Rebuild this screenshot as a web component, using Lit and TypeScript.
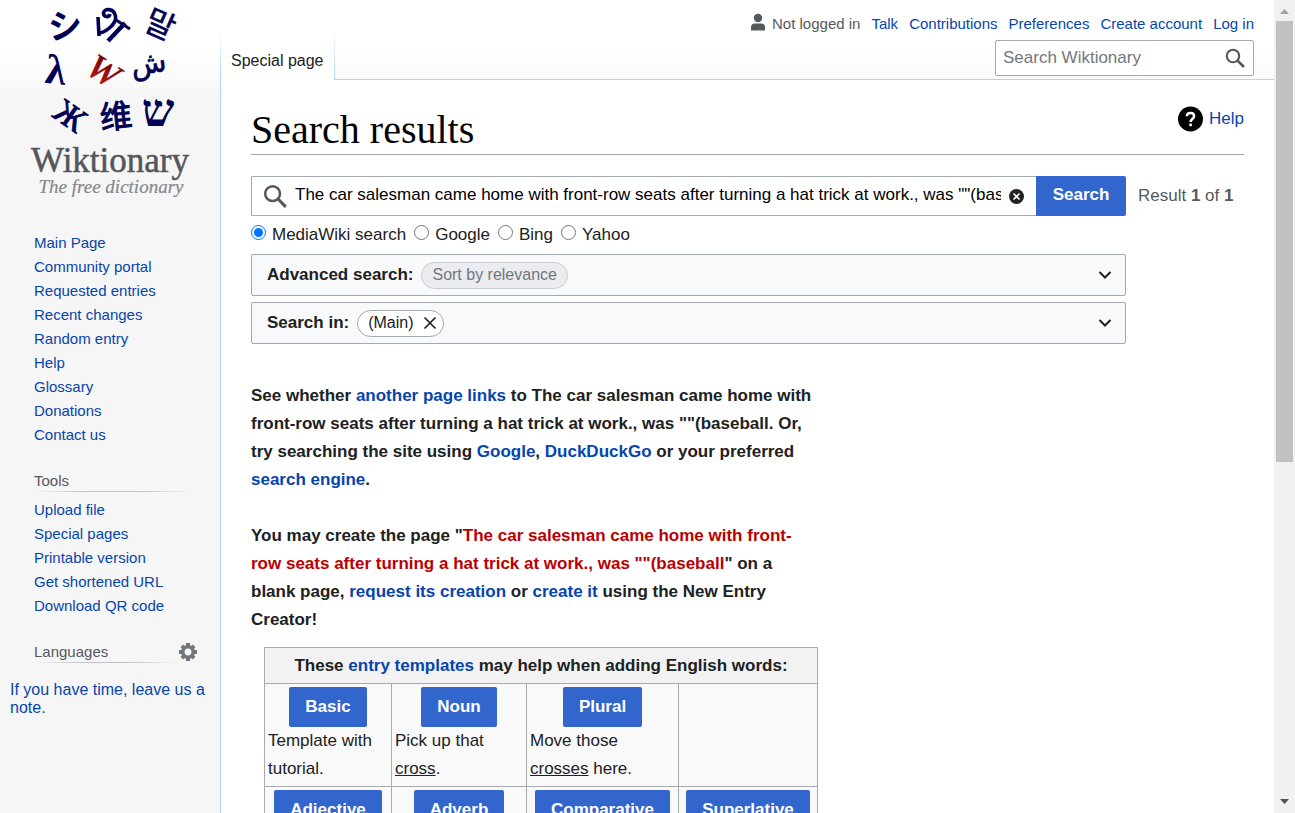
import { LitElement, html, css, svg, nothing } from "lit";
import { customElement, state } from "lit/decorators.js";

const QUERY = 'The car salesman came home with front-row seats after turning a hat trick at work., was ""(baseball';

const NAVIGATION = [
  "Main Page", "Community portal", "Requested entries", "Recent changes", "Random entry",
  "Help", "Glossary", "Donations", "Contact us",
];
const TOOLS = ["Upload file", "Special pages", "Printable version", "Get shortened URL", "Download QR code"];
const PERSONAL = ["Talk", "Contributions", "Preferences", "Create account", "Log in"];
const ENGINES = ["MediaWiki search", "Google", "Bing", "Yahoo"];

const magnifier = svg`<circle cx="8" cy="8" r="6.2" fill="none" stroke="currentColor" stroke-width="2.1"/>
  <path d="M12.3 12.3 19 19" fill="none" stroke="currentColor" stroke-width="2.6"/>`;

@customElement("wikt-logo")
class WiktLogo extends LitElement {
  static styles = css`
    :host { display: block; }
    svg { display: block; width: 100%; height: auto; }
    .navy { fill: #000054; text-anchor: middle; }
    .cjk { font: 700 34px "Noto Sans CJK JP", sans-serif; }
    .hangul { font: 400 32px "Noto Sans CJK KR", sans-serif; stroke: #000054; stroke-width: 0.5; }
    .han { font: 400 32px "Noto Sans CJK SC", sans-serif; stroke: #000054; stroke-width: 1; }
    .greek { font: 700 42px "Liberation Serif", serif; }
    .cyrillic { font: 400 34px "Liberation Serif", serif; stroke: #000054; stroke-width: 0.9; }
    .arabic { font: 400 29px "DejaVu Sans", sans-serif; stroke: #000054; stroke-width: 0.6; }
    .hebrew { font: 700 46px "Liberation Serif", serif; }
    .red { fill: url(#ruby); text-anchor: middle; font: italic 700 36px "Liberation Serif", serif; }
    .name { fill: #54565a; text-anchor: middle; font: 35px "Liberation Serif", serif; stroke: #54565a; stroke-width: 0.5; }
    .tagline { fill: #86888b; text-anchor: middle; font: italic 19px "Liberation Serif", serif; stroke: #86888b; stroke-width: 0.2; }
  `;
  render() {
    return html`<svg viewBox="0 0 220 208" role="img" aria-label="Wiktionary">
      <defs><linearGradient id="ruby" x1="0" y1="0" x2="0" y2="1">
        <stop offset="0" stop-color="#5c0000"/><stop offset="1" stop-color="#d01818"/>
      </linearGradient></defs>
      <text class="navy cjk" x="65" y="38" transform="rotate(-4 65 26)">シ</text>
      <g fill="none" stroke="#000054" stroke-width="3.6">
        <path d="M98 17 99 36"/>
        <path d="M98.500 33C105 33 117 24 115.500 16C114 8 104 8 103.500 13C103.500 17 109 18 110 14"/>
        <path d="M125 23 108 41" stroke-width="4.4"/>
        <path d="M116 20 130 29" stroke-width="3"/>
      </g>
      <text class="navy hangul" x="160" y="36" transform="rotate(24 160 25)">말</text>
      <text class="navy greek" x="56" y="84" transform="rotate(6 56 70)">λ</text>
      <text class="red" x="104" y="83" transform="rotate(33 104 70)">W</text>
      <text class="navy arabic" x="149" y="73" transform="rotate(-8 149 67)">ش</text>
      <text class="navy cyrillic" x="70" y="127" transform="rotate(35 70 116)">Ж</text>
      <text class="navy han" x="116" y="128" transform="rotate(-6 116 116)">维</text>
      <text class="navy hebrew" x="158" y="126">ש</text>
      <text class="name" x="110" y="172">Wiktionary</text>
      <text class="tagline" x="111" y="193">The free dictionary</text>
    </svg>`;
  }
}

@customElement("app-root")
class AppRoot extends LitElement {
  @state() private query = QUERY;
  @state() private engine = ENGINES[0];

  static styles = css`
    :host {
      display: flex; height: 100vh; overflow: hidden; background: #fff; color: #202122;
      font: 17px/28px "Liberation Sans", Arial, sans-serif;
    }
    * { box-sizing: border-box; }
    a { color: #0645ad; text-decoration: none; }
    a:hover { text-decoration: underline; }
    ul { list-style: none; margin: 0; padding: 0; }
    button, input { font: inherit; }
    button { cursor: pointer; }

    .page { flex: 1; min-width: 0; display: grid; grid-template-columns: 220px minmax(0, 1fr); overflow-y: auto; scrollbar-width: none; }

    .sidebar { background: linear-gradient(#fff 0, #fff 50px, #f6f6f6 100px); font-size: 15px; line-height: 24px; }
    .portal { padding: 23px 20px 0 34px; }
    .section { margin-top: 23px; display: flex; align-items: center; }
    .section h3 {
      flex: 1; margin: 0; font: inherit; line-height: 22px; color: #54595d;
      background: linear-gradient(to right, rgba(200, 204, 209, 0), #c0c3c7 33%, #c0c3c7 66%, rgba(200, 204, 209, 0)) bottom / 100% 1px no-repeat;
    }
    .tools h3 { margin-right: 8px; }
    .tools + ul { padding-top: 6px; }
    .gear { display: block; border: 0; padding: 0; margin-right: 2px; background: none; color: #72777d; }
    .gear svg { display: block; }
    .note { margin: 18px 10px 0; font-size: 16px; line-height: 18px; }

    .header { height: 80px; display: flex; justify-content: space-between; background: linear-gradient(#fff 50px, #fafafa 80px); }
    .tabs { flex: none; margin-top: 30px; width: 115px; background: #fff; display: flex; align-items: center; padding: 12px 0 0 10px; line-height: 18px;
      border: solid; border-width: 0 1px; border-image: linear-gradient(#fff, #a7d7f9) 1; font-size: 16px; }
    .tabs a { color: #202122; white-space: nowrap; }
    .tools-right { flex: 1; border-bottom: 1px solid #a7d7f9; padding: 12px 20px 0 0; display: flex; flex-direction: column; align-items: flex-end; gap: 4px; }
    .personal { display: flex; gap: 11px; font-size: 15px; line-height: 24px; color: #54595d; white-space: nowrap; }
    .personal .anon { display: flex; gap: 6px; align-items: flex-start; }
    .anon svg { margin-top: 1px; }
    .quick { flex: none; width: 259px; height: 36px; display: flex; align-items: center; border: 1px solid #a2a9b1; border-radius: 2px; background: #fff; padding: 0 8px 0 7px; }
    .quick input { flex: 1; min-width: 0; border: 0; padding: 0; outline: 0; background: none; height: 32px; }
    .quick input::placeholder { color: #72777d; opacity: 1; }
    .quick button { border: 0; background: none; padding: 0; color: #54595d; }
    .quick svg { display: block; }

    .content { border-left: 1px solid #a7d7f9; background: #fff; padding: 24px 30px 0; }
    .title { display: flex; justify-content: space-between; align-items: flex-start; border-bottom: 1px solid #a2a9b1; }
    h1 { margin: 0; padding-top: 2px; font: 400 40px/48px "Liberation Serif", serif; color: #000; }
    .help { display: flex; align-items: center; gap: 6px; line-height: 28px; padding-top: 1px; }
    .help svg { display: block; }

    .searchrow { display: flex; align-items: center; gap: 12px; margin-top: 21px; }
    .searchbar { flex: 0 1 875px; display: flex; height: 40px; }
    .field { flex: 1; min-width: 0; display: flex; align-items: center; border: 1px solid #a2a9b1; border-right: 0; border-radius: 2px 0 0 2px; padding: 0 12px 0 11px; gap: 8px; color: #54595d; }
    .field svg { flex: none; display: block; }
    .field input { flex: 1; min-width: 0; border: 0; padding: 0 0 2px; outline: 0; background: none; color: #000; }
    .clear { border: 0; background: none; padding: 0; color: #202122; }
    .primary { border: 0; border-radius: 2px; background: #36c; color: #fff; font-weight: 700; height: 40px; padding: 0 16px; white-space: nowrap; }
    .searchbar .primary { border-radius: 0 2px 2px 0; flex: none; width: 90px; padding: 0 0 2px; }
    .count { color: #54595d; white-space: nowrap; }

    .engines { display: flex; gap: 8px; margin: 0; border: 0; padding: 5px 0 0; }
    .engines label { display: flex; gap: 6px; }
    .engines input { width: 15px; height: 15px; margin: 4px 0 0; }

    .panels { display: grid; gap: 6px; padding-top: 5px; }
    .panel { max-width: 875px; height: 42px; display: flex; align-items: center; gap: 8px; padding: 0 13px 0 15px; border: 1px solid #a2a9b1; border-radius: 2px; background: #f8f9fa; }
    .panel .chevron { margin-left: auto; display: block; border: 0; padding: 0; background: none; color: #202122; }
    .chevron svg, .pill svg, .clear svg { display: block; }
    .pill { display: flex; align-items: center; gap: 9px; height: 27px; padding: 0 10px; border: 1px solid #a2a9b1; border-radius: 14px; background: #fff; font-size: 16px; }
    .pill.muted { background: #eaecf0; border-color: #c8ccd1; color: #72777d; }
    .pill button { border: 0; background: none; padding: 0; color: #202122; }
    .pill.closable { padding-right: 6px; }

    .advice { max-width: 570px; margin-top: 38px; font-weight: 700; }
    .advice p { margin: 0 0 28px; }
    .advice p:last-child { margin: 0; }
    .advice .new { color: #ba0000; }

    .templates { width: 554px; margin: 13px 0 0 13px; border-collapse: collapse; table-layout: fixed; background: #f9f9f9; }
    .templates th, .templates td { border: 1px solid #aaa; padding: 3px; vertical-align: top; text-align: left; }
    .templates th { background: #f2f2f2; text-align: center; padding: 4px 3px 3px; }
    .templates .act { display: flex; justify-content: center; }
    .c1 { width: 127px; } .c2 { width: 135px; } .c3 { width: 152px; } .c4 { width: 139px; }

    .scrollbar { flex: none; width: 21px; background: #f1f1f1; display: grid; grid-template-rows: 21px 1fr 21px; justify-items: center; }
    .scrollbar svg { display: block; }
    .thumb { width: 17px; height: 57.2%; background: #c1c1c1; }
  `;

  private links(items: string[]) {
    return html`<ul>${items.map((t) => html`<li><a href="#">${t}</a></li>`)}</ul>`;
  }

  private chevron(label: string) {
    return html`<button type="button" class="chevron" aria-label=${label}><svg width="14" height="14" viewBox="0 0 14 14"><path d="M1.500 4 7 9.500 12.500 4" fill="none" stroke="currentColor" stroke-width="2"/></svg></button>`;
  }

  private cell(name: string, caption: unknown = nothing) {
    return html`<td><div class="act"><button class="primary">${name}</button></div>${caption}</td>`;
  }

  render() {
    return html`
      <div class="page">
        <aside class="sidebar">
          <a href="#" aria-label="Visit the main page"><wikt-logo></wikt-logo></a>
          <nav class="portal">
            ${this.links(NAVIGATION)}
            <div class="section tools"><h3>Tools</h3></div>
            ${this.links(TOOLS)}
            <div class="section"><h3>Languages</h3>
              <button class="gear" aria-label="Language settings"><svg width="20" height="20" viewBox="0 0 20 20">
                <g stroke="currentColor" stroke-width="4"><path d="M10 1v18M1 10h18M3.900 3.900l12.200 12.200M16.100 3.900 3.900 16.100"/></g>
                <circle cx="10" cy="10" r="7" fill="currentColor"/><circle cx="10" cy="10" r="3.400" fill="#f6f6f6"/>
              </svg></button>
            </div>
          </nav>
          <p class="note"><a href="#">If you have time, leave us a note.</a></p>
        </aside>

        <div>
          <header class="header">
            <nav class="tabs"><a href="#">Special page</a></nav>
            <div class="tools-right">
              <nav class="personal">
                <span class="anon"><svg width="16" height="18" viewBox="0 0 16 18" fill="#54595d"><circle cx="8" cy="5" r="4.200"/><path d="M1 17.500v-3Q1 10.500 5 10.500h6q4 0 4 4v3z"/></svg>Not logged in</span>
                ${PERSONAL.map((t) => html`<a href="#">${t}</a>`)}
              </nav>
              <form class="quick" role="search" @submit=${(e: Event) => e.preventDefault()}>
                <input type="text" placeholder="Search Wiktionary" aria-label="Search Wiktionary">
                <button aria-label="Go"><svg width="20" height="20" viewBox="0 0 20 20">${magnifier}</svg></button>
              </form>
            </div>
          </header>

          <main class="content">
            <div class="title">
              <h1>Search results</h1>
              <a class="help" href="#"><svg width="25" height="26" viewBox="0 0 25 26"><circle cx="12.500" cy="13" r="12.500" fill="#000"/>
                <path d="M8.900 10.200C8.900 5.900 16.100 5.900 16.100 10.200C16.100 12.700 12.700 12.800 12.600 16" fill="none" stroke="#fff" stroke-width="2.500"/><path d="M11.300 17.600h2.600v2.600h-2.600z" fill="#fff"/></svg>Help</a>
            </div>

            <form @submit=${(e: Event) => e.preventDefault()}>
              <div class="searchrow">
                <div class="searchbar">
                  <div class="field">
                    <svg width="24" height="24" viewBox="0 0 20 20">${magnifier}</svg>
                    <input type="text" aria-label="Search query" .value=${this.query}
                      @input=${(e: Event) => (this.query = (e.target as HTMLInputElement).value)}>
                    <button type="button" class="clear" aria-label="Clear" @click=${() => (this.query = "")}>
                      <svg width="15" height="15" viewBox="0 0 15 15"><circle cx="7.500" cy="7.500" r="7.500" fill="currentColor"/><path d="m4.500 4.500 6 6m0-6-6 6" stroke="#fff" stroke-width="1.700"/></svg>
                    </button>
                  </div>
                  <button class="primary">Search</button>
                </div>
                <div class="count">Result <b>1</b> of <b>1</b></div>
              </div>
              <fieldset class="engines">
                ${ENGINES.map((t) => html`<label><input type="radio" name="engine" .checked=${this.engine === t} @change=${() => (this.engine = t)}>${t}</label>`)}
              </fieldset>
              <div class="panels">
                <div class="panel"><b>Advanced search:</b><span class="pill muted">Sort by relevance</span>${this.chevron("Expand advanced search")}</div>
                <div class="panel"><b>Search in:</b><span class="pill closable">(Main)
                  <button type="button" aria-label="Remove"><svg width="14" height="14" viewBox="0 0 14 14"><path d="m1.500 1.500 11 11m0-11-11 11" stroke="currentColor" stroke-width="1.700"/></svg></button></span>${this.chevron("Expand namespaces")}</div>
              </div>
            </form>

            <div class="advice">
              <p>See whether <a href="#">another page links</a> to The car salesman came home with front-row seats after turning a hat trick at work., was ""(baseball. Or, try searching the site using <a href="#">Google</a>, <a href="#">DuckDuckGo</a> or your preferred <a href="#">search engine</a>.</p>
              <p>You may create the page "<a class="new" href="#">${QUERY}</a>" on a blank page, <a href="#">request its creation</a> or <a href="#">create it</a> using the New Entry Creator!</p>
            </div>

            <table class="templates">
              <colgroup><col class="c1"><col class="c2"><col class="c3"><col class="c4"></colgroup>
              <tr><th colspan="4">These <a href="#">entry templates</a> may help when adding English words:</th></tr>
              <tr>
                ${this.cell("Basic", html`Template with tutorial.`)}
                ${this.cell("Noun", html`Pick up that <u>cross</u>.`)}
                ${this.cell("Plural", html`Move those<br><u>crosses</u> here.`)}
                <td></td>
              </tr>
              <tr>${["Adjective", "Adverb", "Comparative", "Superlative"].map((t) => this.cell(t))}</tr>
            </table>
          </main>
        </div>
      </div>
      <div class="scrollbar" aria-hidden="true">
        <svg width="17" height="21" viewBox="0 0 17 21"><path d="M4 14 8.500 9l4.500 5z" fill="#a3a3a3"/></svg>
        <div class="thumb"></div>
        <svg width="17" height="21" viewBox="0 0 17 21"><path d="M4 7l4.500 5L13 7z" fill="#505050"/></svg>
      </div>`;
  }
}
